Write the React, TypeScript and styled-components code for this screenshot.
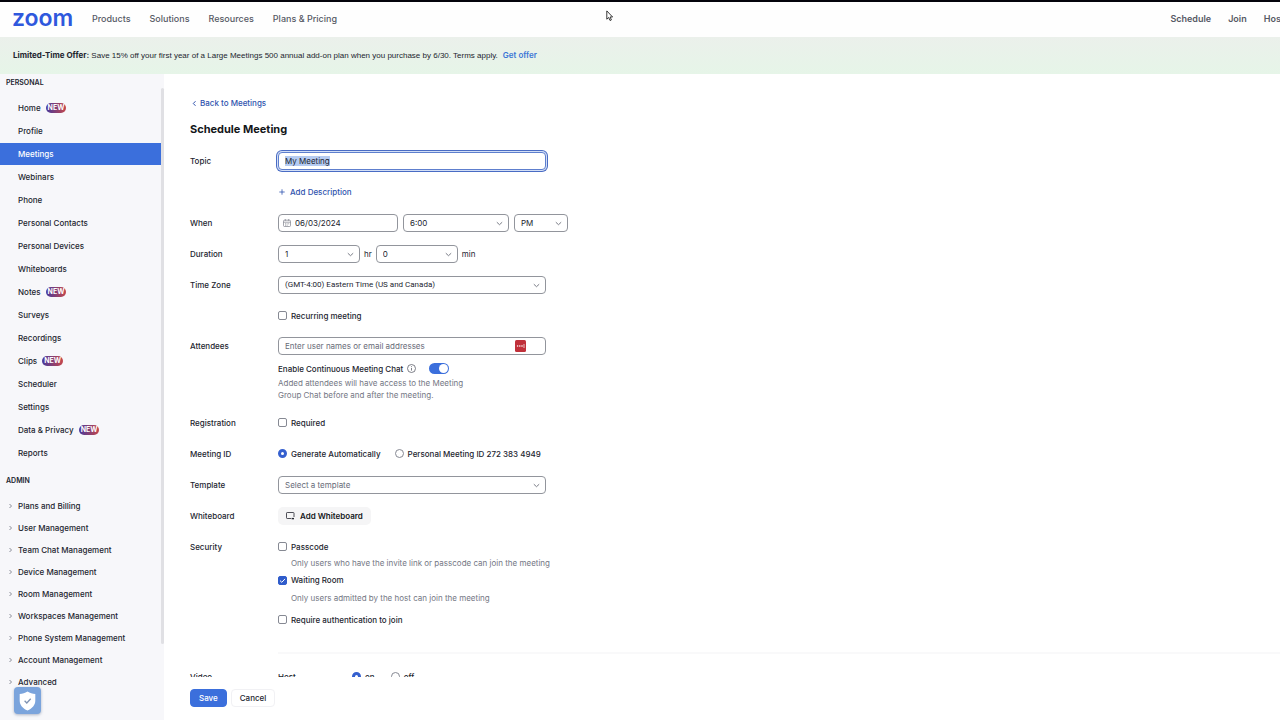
import React, { useEffect, useRef } from "react";
import styled, { createGlobalStyle, css } from "styled-components";

const GlobalStyle = createGlobalStyle`
  *, *::before, *::after { box-sizing: border-box; }
  body { margin: 0; background: #fff; }
  body, button, input, select {
    font-family: Inter, "Liberation Sans", sans-serif;
    font-size: 8px;
    line-height: 12px;
    color: #23252f;
  }
  a { text-decoration: none; color: inherit; }
  ul { list-style: none; margin: 0; padding: 0; }
  button { cursor: pointer; }
`;

const Page = styled.div`
  display: flex;
  flex-direction: column;
  height: 100vh;
  overflow: hidden;
  border-top: 2px solid #04040c;
`;

const Header = styled.header`
  flex: none;
  display: flex;
  align-items: center;
  height: 35px;
  padding: 0 0 2px 12px;
  overflow: hidden;
  background: #fefefe;
`;

const Logo = styled.a`
  width: 60px;
  margin-right: 20px;
  padding-bottom: 2px;
  font-size: 23px;
  font-weight: 600;
  line-height: 26px;
  color: #2f58dd;
`;

const TopNav = styled.nav<{ $end?: boolean }>`
  display: flex;
  gap: ${(p) => (p.$end ? 17 : 19)}px;
  font-size: 9px;
  font-weight: ${(p) => (p.$end ? 600 : 500)};
  color: #565965;
  white-space: nowrap;
  ${(p) =>
    p.$end &&
    css`
      margin-left: auto;
      margin-right: -4px;
    `}
`;

const Offer = styled.div`
  flex: none;
  display: flex;
  align-items: center;
  gap: 5px;
  height: 37px;
  padding: 0 13px 1px;
  background: linear-gradient(#ebf0eb, #e6f5e8);
`;

const OfferText = styled.span`
  font-family: "Liberation Sans", Arial, sans-serif;
  b {
    font-family: Inter, "Liberation Sans", sans-serif;
    font-weight: 700;
  }
`;

const OfferLink = styled.a`
  font-weight: 600;
  color: #3c76d6;
`;

const Body = styled.div`
  flex: 1;
  display: flex;
  min-height: 0;
`;

const Sidebar = styled.aside`
  flex: none;
  display: flex;
  width: 164px;
  background: #f7f7fa;
`;

const SideScroll = styled.nav`
  flex: 1;
  overflow: hidden;
`;

const SideTrack = styled.div`
  flex: none;
  width: 3px;
  padding: 14px 0 76px;
`;

const SideThumb = styled.div`
  height: 100%;
  border-radius: 2px;
  background: #e0e0e4;
`;

const SideHeading = styled.h2<{ $admin?: boolean }>`
  margin: ${(p) => (p.$admin ? "11px 0 8px" : "3px 0 8px")};
  padding-left: 6px;
  font-size: 7px;
  font-weight: 600;
  line-height: 12px;
`;

const SideList = styled.ul<{ $gap?: number }>`
  display: flex;
  flex-direction: column;
  gap: ${(p) => p.$gap ?? 0}px;
`;

const SideLink = styled.a<{ $active?: boolean; $tree?: boolean }>`
  display: flex;
  align-items: center;
  gap: 5px;
  height: 22px;
  padding-left: ${(p) => (p.$tree ? 8 : 18)}px;
  font-weight: 500;
  white-space: nowrap;
  color: ${(p) => (p.$active ? "#fff" : "#23252f")};
  background: ${(p) => (p.$active ? "#3b6fdc" : "transparent")};
`;

const NewBadge = styled.span`
  padding: 0 2px;
  border-radius: 5px;
  font-size: 7px;
  font-weight: 700;
  line-height: 10px;
  color: #fff;
  background: linear-gradient(90deg, #47399b, #c4474c);
`;

const Main = styled.main`
  flex: 1;
  display: flex;
  flex-direction: column;
  min-width: 0;
`;

const MainScroll = styled.div`
  flex: 1;
  min-height: 0;
  overflow: hidden;
  padding: 23px 0 0 26px;
`;

const BackLink = styled.a`
  display: inline-flex;
  align-items: center;
  gap: 3px;
  height: 12px;
  padding-left: 2px;
  font-weight: 500;
  color: #2f53ae;
`;

const Title = styled.h1`
  margin: 11px 0 15px;
  font-size: 11px;
  font-weight: 700;
  line-height: 16px;
  color: #131619;
`;

const FormRow = styled.div<{ $after?: number }>`
  display: grid;
  grid-template-columns: 88px minmax(0, 1fr);
  margin-bottom: ${(p) => p.$after ?? 13}px;
`;

const RowLabel = styled.label`
  font-weight: 500;
  line-height: 18px;
`;

const Line = styled.div<{ $gap?: number; $h?: number; $before?: number }>`
  display: flex;
  align-items: center;
  gap: ${(p) => p.$gap ?? 5}px;
  height: ${(p) => p.$h ?? 18}px;
  margin-top: ${(p) => p.$before ?? 0}px;
`;

const field = css`
  width: 100%;
  height: 18px;
  padding: 0 6px;
  border: 1px solid #92959c;
  border-radius: 4px;
  background: #fff;
  line-height: 16px;
  outline: none;
`;

const Box = styled.div<{ $w: number }>`
  display: grid;
  align-items: center;
  width: ${(p) => p.$w}px;
  & > * { grid-area: 1 / 1; }
  & > svg { pointer-events: none; }
`;

const Select = styled.select<{ $muted?: boolean; $compact?: boolean }>`
  ${field}
  appearance: none;
  color: ${(p) => (p.$muted ? "#686b78" : "#23252f")};
  ${(p) => p.$compact && css`font-family: Roboto, "Liberation Sans", sans-serif;`}
`;

const TextInput = styled.input<{ $icon?: boolean }>`
  ${field}
  padding-left: ${(p) => (p.$icon ? 16 : 6)}px;
  &::placeholder { color: #686b78; opacity: 1; }
  &::selection { background: #b5cbf1; color: #23252f; }
  &:focus {
    border-color: #5e7fce;
    box-shadow: 0 0 0 1px #d3dff6, 0 0 0 2px #4a6cc4;
  }
`;

const TextButton = styled.button`
  display: flex;
  align-items: center;
  gap: 5px;
  padding: 0 1px;
  border: 0;
  background: none;
  font-weight: 500;
  color: #2f53ae;
`;

const Choice = styled.label`
  display: flex;
  align-items: center;
  gap: 4px;
  font-weight: 500;
`;

const CheckInput = styled.input`
  appearance: none;
  width: 9px;
  height: 9px;
  margin: 0;
  border: 1px solid #868993;
  border-radius: 2px;
  background: #fff;
  &:checked { border-color: #2f5ccb; background: #2f5ccb; }
`;

const CheckBox = styled.span`
  display: grid;
  & > * { grid-area: 1 / 1; }
  & > svg { display: none; pointer-events: none; }
  & > input:checked + svg { display: block; }
`;

const Radio = styled.input`
  appearance: none;
  width: 9px;
  height: 9px;
  margin: 0;
  border: 1px solid #868993;
  border-radius: 50%;
  background: #fff;
  &:checked { border: 3px solid #3560cf; }
`;

const Switch = styled.input`
  appearance: none;
  display: flex;
  align-items: center;
  width: 20px;
  height: 11px;
  margin: 0 0 0 9px;
  padding: 0 1px;
  border-radius: 6px;
  background: #a0a3ad;
  &::before {
    content: "";
    width: 9px;
    height: 9px;
    border-radius: 50%;
    background: #fff;
  }
  &:checked { justify-content: flex-end; background: #3b6fdc; }
`;

const Hint = styled.p<{ $indent?: boolean }>`
  margin: 0;
  padding-left: ${(p) => (p.$indent ? 13 : 0)}px;
  line-height: ${(p) => (p.$indent ? 14 : 12)}px;
  color: #747784;
`;

const GrayButton = styled.button`
  display: flex;
  align-items: center;
  gap: 5px;
  height: 18px;
  padding: 0 8px;
  border: 0;
  border-radius: 5px;
  background: #f5f5f6;
  font-weight: 600;
  color: #131619;
`;

const Divider = styled.hr`
  height: 2px;
  margin: 17px 0 14px 88px;
  border: 0;
  background: #f9f9fa;
`;

const HostLabel = styled.span`
  width: 74px;
  font-weight: 500;
`;

const Footer = styled.footer`
  flex: none;
  display: flex;
  gap: 4px;
  height: 43px;
  padding: 12px 0 0 26px;
`;

const FooterButton = styled.button<{ $primary?: boolean }>`
  height: 18px;
  padding: 0 8px;
  border: 1px solid ${(p) => (p.$primary ? "#3b6fdc" : "#f1f1f4")};
  border-radius: 4px;
  background: ${(p) => (p.$primary ? "#3b6fdc" : "#fff")};
  font-weight: 500;
  color: ${(p) => (p.$primary ? "#fff" : "#23252f")};
`;

const ShieldButton = styled.button`
  position: fixed;
  left: 14px;
  bottom: 6px;
  display: grid;
  place-items: center;
  width: 27px;
  height: 27px;
  padding: 0;
  border: 0;
  border-radius: 4px;
  background: #7ba4dc;
  box-shadow: 0 1px 3px rgba(60, 80, 120, 0.4);
`;

const Pointer = styled.svg`
  position: fixed;
  left: 606px;
  top: 10px;
`;

const Chevron = styled.svg`
  justify-self: end;
  margin: 1px 6px 0 0;
`;

const CalendarSvg = styled.svg`
  margin-left: 5px;
`;

const ManagerSvg = styled.svg`
  justify-self: end;
  margin-right: 20px;
`;

type DropdownProps = { id?: string; label?: string; w: number; value: string; muted?: boolean; compact?: boolean };

function Dropdown({ id, label, w, value, muted, compact }: DropdownProps) {
  return (
    <Box $w={w}>
      <Select id={id} aria-label={label} $muted={muted} $compact={compact} defaultValue={value}>
        <option>{value}</option>
      </Select>
      <Chevron width="7" height="5" viewBox="0 0 7 5" fill="none" stroke="#6c6f79" strokeWidth="0.9">
        <path d="M.8 1.2l2.7 2.5 2.7-2.5" />
      </Chevron>
    </Box>
  );
}

function Check({ label, checked }: { label: string; checked?: boolean }) {
  return (
    <Choice>
      <CheckBox>
        <CheckInput type="checkbox" defaultChecked={checked} />
        <svg width="9" height="9" viewBox="0 0 9 9" fill="none" stroke="#fff">
          <path d="M2 4.6l1.8 1.7L7 2.9" />
        </svg>
      </CheckBox>
      {label}
    </Choice>
  );
}

const personal: { name: string; isNew?: boolean }[] = [
  { name: "Home", isNew: true },
  { name: "Profile" },
  { name: "Meetings" },
  { name: "Webinars" },
  { name: "Phone" },
  { name: "Personal Contacts" },
  { name: "Personal Devices" },
  { name: "Whiteboards" },
  { name: "Notes", isNew: true },
  { name: "Surveys" },
  { name: "Recordings" },
  { name: "Clips", isNew: true },
  { name: "Scheduler" },
  { name: "Settings" },
  { name: "Data & Privacy", isNew: true },
  { name: "Reports" },
];

const admin = [
  "Plans and Billing",
  "User Management",
  "Team Chat Management",
  "Device Management",
  "Room Management",
  "Workspaces Management",
  "Phone System Management",
  "Account Management",
  "Advanced",
];

export default function App() {
  const topic = useRef<HTMLInputElement>(null);
  useEffect(() => {
    topic.current?.focus();
    topic.current?.select();
  }, []);

  return (
    <>
      <GlobalStyle />
      <Page>
        <Header>
          <Logo href="#">zoom</Logo>
          <TopNav>
            <a href="#">Products</a>
            <a href="#">Solutions</a>
            <a href="#">Resources</a>
            <a href="#">Plans &amp; Pricing</a>
          </TopNav>
          <TopNav $end>
            <a href="#">Schedule</a>
            <a href="#">Join</a>
            <a href="#">Host</a>
          </TopNav>
        </Header>
        <Offer>
          <OfferText>
            <b>Limited-Time Offer:</b> Save 15% off your first year of a Large Meetings 500 annual add-on plan when you
            purchase by 6/30. Terms apply.
          </OfferText>
          <OfferLink href="#">Get offer</OfferLink>
        </Offer>
        <Body>
          <Sidebar>
            <SideScroll>
              <SideHeading>PERSONAL</SideHeading>
              <SideList $gap={1}>
                {personal.map((item) => (
                  <li key={item.name}>
                    <SideLink href="#" $active={item.name === "Meetings"}>
                      {item.name}
                      {item.isNew && <NewBadge>NEW</NewBadge>}
                    </SideLink>
                  </li>
                ))}
              </SideList>
              <SideHeading $admin>ADMIN</SideHeading>
              <SideList>
                {admin.map((name) => (
                  <li key={name}>
                    <SideLink href="#" $tree>
                      <svg width="5" height="6" viewBox="0 0 5 6" fill="none" stroke="#8a8d98">
                        <path d="M1.5 1l2 2-2 2" />
                      </svg>
                      {name}
                    </SideLink>
                  </li>
                ))}
              </SideList>
            </SideScroll>
            <SideTrack>
              <SideThumb />
            </SideTrack>
          </Sidebar>
          <Main>
            <MainScroll>
              <BackLink href="#">
                <svg width="5" height="7" viewBox="0 0 5 7" fill="none" stroke="currentColor">
                  <path d="M3.5 1.2L1.3 3.5l2.2 2.3" />
                </svg>
                Back to Meetings
              </BackLink>
              <Title>Schedule Meeting</Title>

              <FormRow>
                <RowLabel htmlFor="topic">Topic</RowLabel>
                <Box $w={268}>
                  <TextInput id="topic" ref={topic} type="text" defaultValue="My Meeting" />
                </Box>
              </FormRow>
              <FormRow>
                <span />
                <Line>
                  <TextButton type="button">
                    <svg width="6" height="6" viewBox="0 0 6 6" stroke="currentColor" strokeWidth="0.8">
                      <path d="M3 .3v5.4M.3 3h5.4" />
                    </svg>
                    Add Description
                  </TextButton>
                </Line>
              </FormRow>
              <FormRow>
                <RowLabel htmlFor="date">When</RowLabel>
                <Line>
                  <Box $w={120}>
                    <TextInput id="date" type="text" $icon defaultValue="06/03/2024" />
                    <CalendarSvg width="8" height="8" viewBox="0 0 8 8" fill="none" stroke="#7d808a" strokeWidth="0.7">
                      <rect x="0.5" y="1.2" width="7" height="6.3" rx="1" />
                      <path d="M0.5 3.2h7M2.3 0v1.8M5.7 0v1.8M2 4.8h1M3.6 4.8h1M5.2 4.8h1M2 6.2h1M3.6 6.2h1" />
                    </CalendarSvg>
                  </Box>
                  <Dropdown label="Time" w={106} value="6:00" />
                  <Dropdown label="AM or PM" w={54} value="PM" />
                </Line>
              </FormRow>
              <FormRow>
                <RowLabel htmlFor="hours">Duration</RowLabel>
                <Line $gap={4}>
                  <Dropdown id="hours" w={82} value="1" />
                  <span>hr</span>
                  <Dropdown label="Minutes" w={82} value="0" />
                  <span>min</span>
                </Line>
              </FormRow>
              <FormRow>
                <RowLabel htmlFor="zone">Time Zone</RowLabel>
                <Dropdown id="zone" w={268} value="(GMT-4:00) Eastern Time (US and Canada)" compact />
              </FormRow>
              <FormRow $after={12}>
                <span />
                <Line>
                  <Check label="Recurring meeting" />
                </Line>
              </FormRow>
              <FormRow>
                <RowLabel htmlFor="attendees">Attendees</RowLabel>
                <div>
                  <Box $w={268}>
                    <TextInput id="attendees" type="text" placeholder="Enter user names or email addresses" />
                    <ManagerSvg width="11" height="12" viewBox="0 0 11 12">
                      <rect width="11" height="12" rx="1.5" fill="#c0303a" />
                      <circle cx="2.6" cy="6" r="0.8" fill="#fff" />
                      <circle cx="4.8" cy="6" r="0.8" fill="#fff" />
                      <circle cx="7" cy="6" r="0.8" fill="#fff" />
                      <path d="M9 4v4" stroke="#fff" strokeWidth="0.7" />
                    </ManagerSvg>
                  </Box>
                  <Line $gap={4} $h={16} $before={6}>
                    <Choice htmlFor="chat">Enable Continuous Meeting Chat</Choice>
                    <svg width="9" height="9" viewBox="0 0 9 9" fill="none" stroke="#5d606b" strokeWidth="0.8">
                      <circle cx="4.5" cy="4.5" r="4" />
                      <path d="M4.5 4v2.6M4.5 2.2v0.9" />
                    </svg>
                    <Switch id="chat" type="checkbox" role="switch" defaultChecked />
                  </Line>
                  <Hint>
                    Added attendees will have access to the Meeting
                    <br />
                    Group Chat before and after the meeting.
                  </Hint>
                </div>
              </FormRow>
              <FormRow>
                <RowLabel as="span">Registration</RowLabel>
                <Line>
                  <Check label="Required" />
                </Line>
              </FormRow>
              <FormRow>
                <RowLabel as="span">Meeting ID</RowLabel>
                <Line $gap={14}>
                  <Choice>
                    <Radio type="radio" name="mid" defaultChecked />
                    Generate Automatically
                  </Choice>
                  <Choice>
                    <Radio type="radio" name="mid" />
                    Personal Meeting ID 272 383 4949
                  </Choice>
                </Line>
              </FormRow>
              <FormRow>
                <RowLabel htmlFor="template">Template</RowLabel>
                <Dropdown id="template" w={268} value="Select a template" muted />
              </FormRow>
              <FormRow>
                <RowLabel as="span">Whiteboard</RowLabel>
                <Line>
                  <GrayButton type="button">
                    <svg width="9" height="8" viewBox="0 0 9 8" fill="none" stroke="#23252f" strokeWidth="0.8">
                      <path d="M5 6.5H1.2a.7.7 0 0 1-.7-.7V1.2a.7.7 0 0 1 .7-.7h6.1a.7.7 0 0 1 .7.7V5" />
                      <path d="M5.600 6.600h2.400" strokeWidth="1.400" />
                    </svg>
                    Add Whiteboard
                  </GrayButton>
                </Line>
              </FormRow>
              <FormRow $after={0}>
                <RowLabel as="span">Security</RowLabel>
                <div>
                  <Line>
                    <Check label="Passcode" />
                  </Line>
                  <Hint $indent>Only users who have the invite link or passcode can join the meeting</Hint>
                  <Line $h={21}>
                    <Check label="Waiting Room" checked />
                  </Line>
                  <Hint $indent>Only users admitted by the host can join the meeting</Hint>
                  <Line $h={30}>
                    <Check label="Require authentication to join" />
                  </Line>
                </div>
              </FormRow>
              <Divider />
              <FormRow>
                <RowLabel as="span">Video</RowLabel>
                <Line $gap={0}>
                  <HostLabel>Host</HostLabel>
                  <Line $gap={16}>
                    <Choice>
                      <Radio type="radio" name="host" defaultChecked />
                      on
                    </Choice>
                    <Choice>
                      <Radio type="radio" name="host" />
                      off
                    </Choice>
                  </Line>
                </Line>
              </FormRow>
            </MainScroll>
            <Footer>
              <FooterButton $primary type="button">
                Save
              </FooterButton>
              <FooterButton type="button">Cancel</FooterButton>
            </Footer>
          </Main>
        </Body>
      </Page>
      <ShieldButton type="button" aria-label="Privacy settings">
        <svg width="17" height="20" viewBox="0 0 17 20">
          <path d="M8.5 0.5c2.4 1.6 5 2.3 7.8 2.4v6.6c0 4.6-3 7.8-7.8 10C3.7 17.3.7 14.1.7 9.5V2.9C3.5 2.8 6.1 2.1 8.5.5z" fill="#fff" />
          <path d="M5.6 9.8l2.2 2.2 3.9-4.2" fill="none" stroke="#7f93b3" strokeWidth="1.3" />
        </svg>
      </ShieldButton>
      <Pointer width="8" height="12" viewBox="0 0 8 12">
        <path d="M.8.9v8.3l1.9-1.7 1.3 3 1.4-.6-1.3-2.9h2.5z" fill="#fff" stroke="#222" strokeWidth="0.9" />
      </Pointer>
    </>
  );
}
